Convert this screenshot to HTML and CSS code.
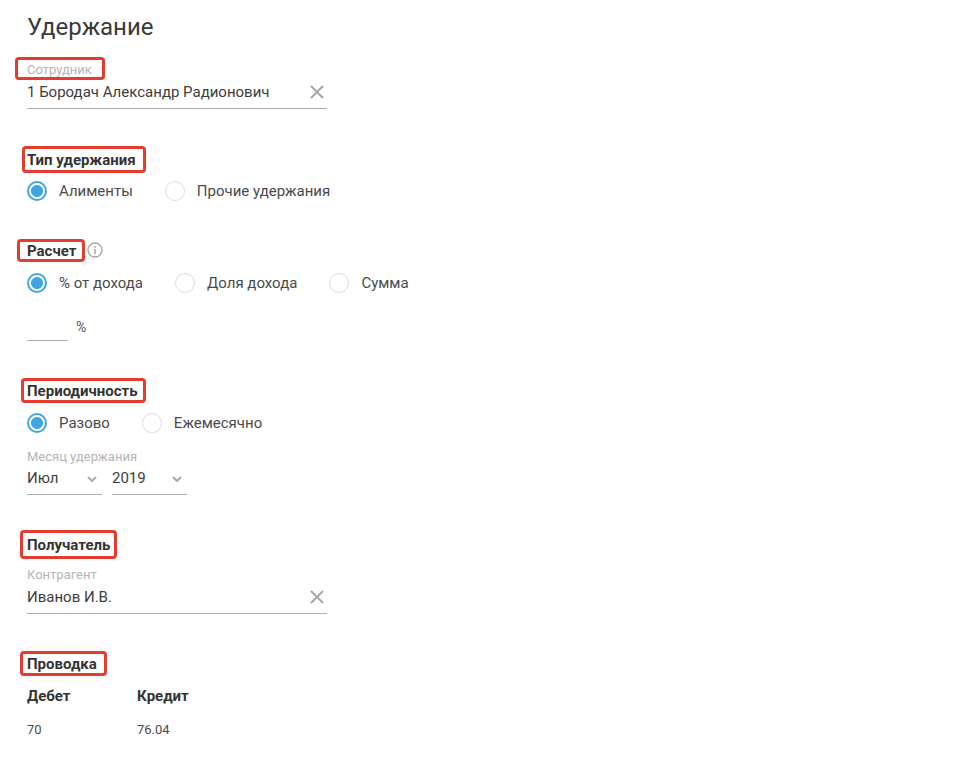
FILE: index.html
```html
<!DOCTYPE html>
<html lang="ru">
<head>
    <meta charset="UTF-8">
    <title>Удержание</title>
    <link rel="stylesheet" href="styles.css">
</head>
<body>
    <svg class="icon-defs" width="0" height="0">
        <symbol id="icon-clear" viewBox="0 0 14 14"><path d="M1 1l12 12M13 1L1 13" fill="none" stroke="#a8a8a8" stroke-width="2"/></symbol>
        <symbol id="icon-chevron" viewBox="0 0 10 6"><path d="M1 1l4 4 4-4" fill="none" stroke="#a8a8a8" stroke-width="2"/></symbol>
    </svg>

    <main class="page">
        <h1 class="page-title">Удержание</h1>

        <section class="block block-employee">
            <span class="field-label mark mark-employee">Сотрудник</span>
            <div class="field field-wide">
                <span class="field-value">1 Бородач Александр Радионович</span>
                <svg class="icon-clear"><use href="#icon-clear"/></svg>
            </div>
        </section>

        <section class="block block-type">
            <h2 class="block-title mark mark-type">Тип удержания</h2>
            <div class="radio-row">
                <label class="radio checked">Алименты</label>
                <label class="radio">Прочие удержания</label>
            </div>
        </section>

        <section class="block block-calc">
            <div class="title-row">
                <h2 class="block-title mark mark-calc">Расчет</h2>
                <svg class="icon-info" viewBox="0 0 16 16">
                    <circle cx="8" cy="8" r="7" fill="none" stroke="#a8a8a8" stroke-width="1.4"/>
                    <rect x="7.2" y="7" width="1.6" height="5" fill="#a8a8a8"/>
                    <rect x="7.2" y="4" width="1.6" height="1.7" fill="#a8a8a8"/>
                </svg>
            </div>
            <div class="radio-row radio-row-calc">
                <label class="radio checked">% от дохода</label>
                <label class="radio">Доля дохода</label>
                <label class="radio">Сумма</label>
            </div>
            <div class="percent-row">
                <div class="percent-input"></div>
                <span class="percent-sign">%</span>
            </div>
        </section>

        <section class="block block-period">
            <h2 class="block-title mark mark-period">Периодичность</h2>
            <div class="radio-row radio-row-period">
                <label class="radio checked">Разово</label>
                <label class="radio">Ежемесячно</label>
            </div>
            <span class="field-label month-label">Месяц удержания</span>
            <div class="select-row">
                <div class="field field-select">
                    <span class="field-value">Июл</span>
                    <svg class="icon-chevron"><use href="#icon-chevron"/></svg>
                </div>
                <div class="field field-select">
                    <span class="field-value">2019</span>
                    <svg class="icon-chevron"><use href="#icon-chevron"/></svg>
                </div>
            </div>
        </section>

        <section class="block block-receiver">
            <h2 class="block-title mark mark-receiver">Получатель</h2>
            <span class="field-label agent-label">Контрагент</span>
            <div class="field field-wide">
                <span class="field-value">Иванов И.В.</span>
                <svg class="icon-clear"><use href="#icon-clear"/></svg>
            </div>
        </section>

        <section class="block block-posting">
            <h2 class="block-title mark mark-posting">Проводка</h2>
            <div class="posting-grid">
                <div class="posting-head">Дебет</div>
                <div class="posting-head">Кредит</div>
                <div class="posting-cell">70</div>
                <div class="posting-cell">76.04</div>
            </div>
        </section>
    </main>
</body>
</html>
```

FILE: styles.css
```css
*, *::before {
    margin: 0;
    padding: 0;
    box-sizing: border-box;
}

body {
    background: #fff;
    color: #3c3c3c;
    font-family: Roboto, 'Noto Sans', sans-serif;
    font-size: 15px;
}

.icon-defs {
    display: block;
    height: 0;
}

.page {
    padding: 12px 0 0 27px;
}

.page-title {
    font-size: 24px;
    font-weight: 400;
    line-height: 30px;
    color: #3a3a3a;
}

/* красные рамки поверх заголовков */
.mark {
    display: block;
    width: fit-content;
    border: 3px solid #e53c2f;
    border-radius: 4px;
}

.mark-employee {
    height: 23px;
    margin-left: -12px;
    padding: 0 10px 0 9px;
    line-height: 20px;
}

.mark-type {
    height: 27px;
    margin-left: -5px;
    padding: 0 7px 0 2px;
    line-height: 22px;
}

.mark-calc {
    height: 23px;
    margin-left: -10px;
    padding: 0 6px 0 7px;
    line-height: 18px;
}

.mark-period {
    height: 25px;
    margin-left: -6px;
    padding: 0 5px 0 3px;
    line-height: 20px;
}

.mark-receiver {
    height: 29px;
    margin-left: -7px;
    padding: 0 4px;
    line-height: 24px;
}

.mark-posting {
    height: 25px;
    margin-left: -7px;
    padding: 0 7px 0 4px;
    line-height: 20px;
}

.block-employee { margin-top: 15px; }
.block-type { margin-top: 37px; }
.block-calc { margin-top: 38px; }
.block-period { margin-top: 37px; }
.block-receiver { margin-top: 35px; }
.block-posting { margin-top: 37px; }

.block-title {
    font-size: 15px;
    font-weight: 700;
    color: #333;
}

.field-label {
    font-size: 13px;
    color: #b4b4b4;
}

.title-row {
    display: flex;
    align-items: center;
    gap: 2px;
}

.icon-info {
    width: 16px;
    height: 16px;
    margin-top: -2px;
}

.radio-row {
    display: flex;
    gap: 32px;
    height: 20px;
    margin-top: 8px;
}

.radio-row-calc {
    margin-top: 11px;
}

.radio-row-period {
    margin-top: 10px;
}

.radio {
    display: flex;
    align-items: center;
    font-size: 15px;
    color: #4a4a4a;
}

.radio::before {
    content: "";
    width: 20px;
    height: 20px;
    margin-right: 12px;
    border: 1px solid #dcdcdc;
    border-radius: 50%;
    background: #fff;
}

.radio.checked::before {
    border: 2px solid #3fa6e2;
    background: radial-gradient(circle, #3fa6e2 0 5.5px, #fff 6.5px);
}

.field {
    display: flex;
    align-items: center;
    justify-content: space-between;
    border-bottom: 1px solid #b0b0b0;
}

.field-wide {
    width: 300px;
    height: 29px;
    padding: 0 3px 4px 0;
}

.field-value {
    font-size: 15px;
    color: #3c3c3c;
}

.icon-clear {
    width: 14px;
    height: 14px;
}

.icon-chevron {
    width: 10px;
    height: 6px;
    margin-top: 1px;
}

.percent-row {
    display: flex;
    gap: 8px;
    margin-top: 17px;
    height: 31px;
}

.percent-input {
    width: 41px;
    border-bottom: 1px solid #b0b0b0;
}

.percent-sign {
    font-size: 14px;
    line-height: 35px;
    color: #555;
}

.month-label {
    display: block;
    line-height: 14px;
    margin-top: 17px;
}

.select-row {
    display: flex;
    gap: 10px;
}

.field-select {
    width: 75px;
    height: 31px;
    padding: 0 5px 2px 0;
}

.agent-label {
    display: block;
    line-height: 14px;
    margin: 9px 0 3px;
}

.posting-grid {
    display: grid;
    grid-template-columns: 110px 110px;
    grid-template-rows: 24px 24px;
    row-gap: 9px;
    margin-top: 8px;
    align-items: center;
}

.posting-head {
    font-size: 15px;
    font-weight: 700;
    color: #333;
}

.posting-cell {
    font-size: 13px;
    color: #4a4a4a;
}
```
